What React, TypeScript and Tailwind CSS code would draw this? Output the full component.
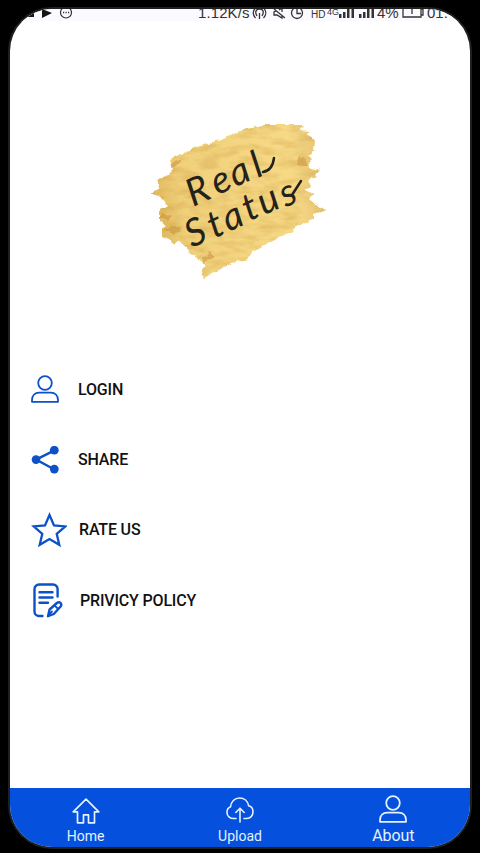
import type { ReactNode } from 'react'

interface MenuItem {
  label: string
  icon: ReactNode
  className: string
}

const UserIcon = ({ className, strokeWidth = 1.8 }: { className?: string; strokeWidth?: number }) => (
  <svg viewBox="0 0 28 28" className={className} fill="none" stroke="currentColor" strokeWidth={strokeWidth} strokeLinejoin="round">
    <circle cx="14" cy="8" r="6.8" />
    <path d="M1 26.8v-1.6c0-4.6 3-7.6 7.2-7.6h11.6c4.2 0 7.2 3 7.2 7.6v1.6z" />
  </svg>
)

const ShareIcon = () => (
  <svg viewBox="0 0 28 28" className="h-7 w-7" fill="currentColor">
    <path d="M23 4.6 5 13.6l18 9.6" fill="none" stroke="currentColor" strokeWidth="2.4" />
    <circle cx="5" cy="13.6" r="4.3" />
    <circle cx="23.3" cy="4.2" r="4.4" />
    <circle cx="23.3" cy="23.1" r="4.4" />
  </svg>
)

const StarIcon = () => (
  <svg viewBox="0 0 36 36" className="h-9 w-9" fill="none" stroke="currentColor" strokeWidth="2.3" strokeLinejoin="miter">
    <path d="m18.5 3 4.5 10.400 11.3 1-8.6 7.4 2.6 11-9.800-5.800-9.800 5.800 2.600-11-8.600-7.400 11.300-1z" />
  </svg>
)

const PolicyIcon = () => (
  <svg viewBox="0 0 30 35" className="h-[35px] w-[30px]" fill="none" stroke="currentColor" strokeWidth="2.4" strokeLinecap="round" strokeLinejoin="round">
    <path d="M24.600 13.500V6a4.500 4.500 0 0 0-4.500-4.500H6A4.500 4.500 0 0 0 1.500 6v22.500A4.500 4.500 0 0 0 6 33h3.500" />
    <path d="M6.500 9.200h13M6.500 14.500h13M6.500 19.700h8.500" />
    <path d="m15 33.200 1.600-6.700 7.300-6.500c2.700-2 5.600.8 3.700 3.500l-6.800 7.500z" />
    <path d="m22 22.800 3.200 3.200M16.500 31l2.500-2.500" strokeWidth="1.800" />
  </svg>
)

const HomeIcon = () => (
  <svg viewBox="0 0 28 26" className="h-[26px] w-7" fill="none" stroke="currentColor" strokeWidth="1.7" strokeLinejoin="round">
    <path d="M14 1.200 1.200 13.800h4.300v11h6v-8h5v8h6v-11h4.300z" />
  </svg>
)

const UploadIcon = () => (
  <svg viewBox="0 0 28 26" className="h-[26px] w-7" fill="none" stroke="currentColor" strokeWidth="1.600" strokeLinecap="round" strokeLinejoin="round">
    <path d="M10 21.500H7.800C3.900 21.500 1 19 1 15.400c0-2.800 1.300-4.800 3.600-5.600C4.900 4.600 8.600 1 13.600 1c4.600 0 8.200 3 9 7.700 2.800.6 4.400 3 4.400 6 0 4-2.700 6.800-6.300 6.800H18" />
    <path d="M14 25V11.500M9.800 15.500 14 11.200l4.200 4.300" />
  </svg>
)

const Logo = () => (
  <svg viewBox="0 0 200 180" className="h-[180px] w-[200px]">
    <defs>
      <linearGradient id="gold" x1="0" y1="0.5" x2="1" y2="0.4">
        <stop offset="0" stopColor="#dfb75c" />
        <stop offset="0.18" stopColor="#f0d07b" />
        <stop offset="0.8" stopColor="#f7d986" />
        <stop offset="1" stopColor="#e5c373" />
      </linearGradient>
      <filter id="paint" x="-5%" y="-5%" width="110%" height="110%" colorInterpolationFilters="sRGB">
        <feTurbulence type="fractalNoise" baseFrequency="0.12" numOctaves="3" seed="4" result="edge" />
        <feDisplacementMap in="SourceGraphic" in2="edge" scale="6" xChannelSelector="R" yChannelSelector="G" result="shape" />
        <feTurbulence type="fractalNoise" baseFrequency="0.05 0.14" numOctaves="4" seed="9" />
        <feColorMatrix values="0 0 0 0 0.8  0 0 0 0 0.62  0 0 0 0 0.25  0.9 0 0 0 -0.36" result="grain" />
        <feComposite in="grain" in2="shape" operator="in" result="texture" />
        <feMerge>
          <feMergeNode in="shape" />
          <feMergeNode in="texture" />
        </feMerge>
      </filter>
    </defs>
    <g filter="url(#paint)">
      <path
        fill="url(#gold)"
        d="M29 50 41 43 50 41 61 35 79 30 97 22 123 15 139 15 163 15 159 20 170 21 166 25 172 27 175 31 174 41 168 46 171 49 167 53 169 57 181 61 175 64 178 67 168 70 171 76 162 79 174 84 169 88 177 95 187 100 174 104 174 109 156 116 150 122 132 130 112 142 108 149 92 152 77 161 65 168 61 164 63 157 67 154 59 151 55 145 49 143 48 137 37 131 34 135 29 130 22 127 22 119 26 116 20 111 20 100 27 95 23 89 12 83 20 78 18 70 27 65 33 59z"
      />
      <path d="m24 121 10 4 8-7-9-3zM62 148l8-6 3 4-9 7zM167 56l-10-1 1-8 7-1zM22 103l11 3-4 4-9-2zM31 53l13-4-6 7-8 2z" fill="#c38c36" opacity="0.5" />
    </g>
    <g fill="#25221a" fontFamily="Lato, 'Noto Sans', sans-serif" fontStyle="italic">
      <text transform="translate(53 97) rotate(-25)" fontSize="38" x="0 27 47 71" y="0 0 0 1">Real</text>
      <text transform="translate(52 138) rotate(-25)" fontSize="38" x="0 24 40 63 79 102" y="0 1 1 0 1 3">Status</text>
    </g>
    {/* pen stroke that runs out of the last letter of each word */}
    <g fill="none" stroke="#25221a" strokeWidth="2.5" strokeLinecap="round">
      <path d="M123 62c6-1 10-6 11-14M152 85l9-14" />
    </g>
  </svg>
)

const SignalBars = () => (
  <svg viewBox="0 0 16 12" className="h-3 w-4" fill="#333">
    <path d="M0 8h2.500v4H0zM4 6h2.500v6H4zM8 2h2.500v10H8zM12.500 0H15v12h-2.500z" />
  </svg>
)

// The bar sits half under the top edge of the device
const StatusBar = () => (
  <div className="relative h-3 overflow-hidden bg-[#fbfaff] font-['Liberation_Sans',sans-serif] text-[#333]">
    <svg viewBox="0 0 60 12" className="absolute left-[14px] top-0 h-3 w-[60px]">
      <path d="M0 0h10v8H0zM18 0l10 4-10 5z" fill="#151515" />
      <circle cx="42" cy="3.500" r="5.500" fill="none" stroke="#333" strokeWidth="1.200" />
      <path d="M39 3.500h1.200M41.500 3.500h1.200M44 3.500h1.200" stroke="#333" strokeWidth="1.300" />
    </svg>
    <span className="absolute left-[188px] top-[-5px] whitespace-nowrap text-[15px] leading-[18px] tracking-[0.1px]">1.12K/s</span>
    <svg viewBox="0 0 56 14" className="absolute left-[242px] top-[-3px] h-[14px] w-14" fill="none" stroke="#333" strokeWidth="1.300">
      <path d="M3.500 2c-3 3-3 7 0 10M11.500 2c3 3 3 7 0 10M5 10c-3-5 0-7 2.500-7s5.500 2 2.500 7M7.500 7v6" />
      <path d="m22 3 11 9M24 5l-2 1v3h3l5 3V9M27 4l3-2v4" />
      <circle cx="45" cy="7" r="5.500" />
      <path d="M45 3v4.500h4" />
    </svg>
    <span className="absolute left-[301px] top-0 text-[10px] leading-3">HD</span>
    <span className="absolute left-[317px] top-[-2px] text-[9px] leading-[11px]">4G</span>
    <div className="absolute left-[329px] top-[-3px] flex gap-1">
      <SignalBars />
      <SignalBars />
    </div>
    <span className="absolute left-[367px] top-[-5px] text-[15px] leading-[18px]">4%</span>
    <svg viewBox="0 0 22 14" className="absolute left-[392px] top-[-5px] h-[14px] w-[22px]" fill="none" stroke="#333" strokeWidth="1.300">
      <path d="M1 1h18v12H1zM19 5h2v6h-2M10 5v5" />
    </svg>
    <span className="absolute left-[417px] top-[-5px] text-[15px] leading-[18px]">01:</span>
  </div>
)

const menuItems: MenuItem[] = [
  { label: 'LOGIN', icon: <UserIcon className="h-7 w-7" />, className: 'pl-[21px] gap-[19px]' },
  { label: 'SHARE', icon: <ShareIcon />, className: 'pl-[21px] gap-[19px]' },
  { label: 'RATE US', icon: <StarIcon />, className: 'pl-[21px] gap-3' },
  { label: 'PRIVICY POLICY', icon: <PolicyIcon />, className: 'pl-[23px] gap-[17px]' },
]

const App = () => {
  return (
    <div className="h-[853px] w-[480px] overflow-hidden bg-black px-2 pt-[7px] font-['Roboto',sans-serif]">
      <div className="h-[842px] rounded-[44px] border-2 border-[#202020] bg-black">
        <div className="flex h-[838px] flex-col overflow-hidden rounded-[42px] bg-white">
          <StatusBar />
          <div className="flex h-[325px] justify-center pt-[89px]">
            <Logo />
          </div>
          <main className="flex-1 pt-[8px]">
            {menuItems.map((item) => (
              <div key={item.label} className={`flex h-[70.4px] items-center text-[#0d50c8] ${item.className}`}>
                {item.icon}
                <span className="pt-px text-base font-medium tracking-[-0.17px] text-[#111]">{item.label}</span>
              </div>
            ))}
          </main>
          <nav className="grid h-[59px] grid-cols-3 bg-[#0550dc] text-[#e2f2ff]">
            <div className="flex flex-col items-center pr-0.5 pt-[10px]">
              <HomeIcon />
              <span className="mt-[2px] text-sm leading-5">Home</span>
            </div>
            <div className="flex flex-col items-center pt-[9px]">
              <UploadIcon />
              <span className="mt-[3px] text-sm leading-5">Upload</span>
            </div>
            <div className="flex flex-col items-center pt-[7px]">
              <UserIcon className="h-7 w-7" strokeWidth={1.8} />
              <span className="mt-[3px] text-base leading-5 tracking-[-0.1px]">About</span>
            </div>
          </nav>
        </div>
      </div>
    </div>
  )
}

export default App
